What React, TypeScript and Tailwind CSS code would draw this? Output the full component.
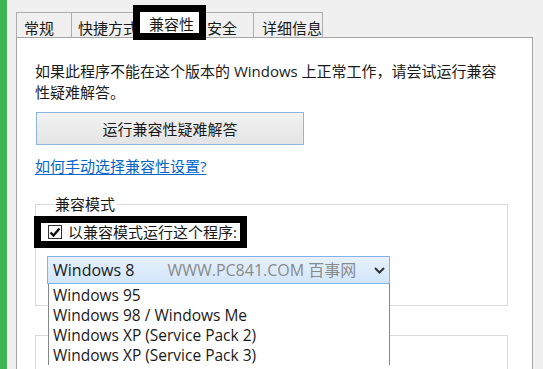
import { useState } from 'react'

const FONT = "font-['Open_Sans','Noto_Sans_CJK_SC',sans-serif]"

const OPTIONS = [
  'Windows 95',
  'Windows 98 / Windows Me',
  'Windows XP (Service Pack 2)',
  'Windows XP (Service Pack 3)',
]

export default function App() {
  const [checked, setChecked] = useState(true)

  return (
    <div className={`flex h-[369px] w-[543px] overflow-hidden bg-[#f0f0f0] text-[#1a1a1a] ${FONT}`}>
      {/* 窗口左侧绿色边 */}
      <div className="w-[7px] shrink-0 bg-[#3db652]" />
      <div className="w-[1px] shrink-0 bg-[#fafafa]" />
      <div className="flex min-w-0 flex-1 flex-col">
        <div className="h-[3px] bg-[#f6f6f6]" />
        <div className="h-[2px] bg-[#3db652]" />

        {/* 标签页 */}
        <div className="relative ml-[8px] mt-[12px] flex h-[25px] items-end text-[15px] leading-[20px]">
          <div className="h-[25px] w-[55px] border-l border-t border-[#adadad] pl-[7px] pt-[5px]">常规</div>
          <div className="h-[25px] w-[67px] border-l border-t border-[#adadad] pl-[6px] pt-[5px]">快捷方式</div>
          <div className="z-10 -mb-[1px] h-[28px] w-[65px] border-l border-r border-t border-[#adadad] bg-white pl-[10px] pt-[3px]">
            兼容性
          </div>
          <div className="h-[25px] w-[50px] border-t border-[#adadad] pl-[4px] pt-[5px]">安全</div>
          <div className="h-[25px] w-[70px] border-l border-r border-t border-[#adadad] pl-[8px] pt-[5px]">详细信息</div>
          <div className="pointer-events-none absolute left-[117px] top-[-7px] z-20 h-[35px] w-[73px] border-[7px] border-black" />
        </div>

        {/* 内容面板 */}
        <div className="ml-[8px] w-[517px] flex-1 border border-[#a5a5a5] bg-white pl-[18px] pr-[24px] pt-[23px] text-[15px] leading-[20px]">
          <p className="whitespace-nowrap leading-[21px]">
            如果此程序不能在这个版本的 Windows 上正常工作，请尝试运行兼容
            <br />
            性疑难解答。
          </p>

          <button
            type="button"
            className="mt-[9px] ml-[1px] flex h-[33px] w-[268px] items-center justify-center border border-[#8ab6e2] bg-gradient-to-b from-[#f2f2f2] to-[#e4e4e4]"
          >
            运行兼容性疑难解答
          </button>

          <a href="#" className="mt-[11px] block w-fit text-[#0066cc] underline underline-offset-2">
            如何手动选择兼容性设置?
          </a>

          <fieldset className="mt-[18px] h-[112px] border border-[#dadada] pl-[11px]">
            <legend className="ml-[7px] px-[1px]">兼容模式</legend>

            <label className="relative mt-[8px] flex h-[20px] items-center pl-[1px]">
              <input
                type="checkbox"
                className="sr-only"
                checked={checked}
                onChange={() => setChecked(!checked)}
              />
              <span className="flex h-[14px] w-[14px] items-center justify-center border border-[#333] bg-white">
                {checked && (
                  <svg width="12" height="11" viewBox="0 0 12 11">
                    <path d="M1.5 5.5 L4.5 8.5 L10.5 1.5" fill="none" stroke="#111" strokeWidth="2.4" />
                  </svg>
                )}
              </span>
              <span className="ml-[6px]">以兼容模式运行这个程序:</span>
              <span className="pointer-events-none absolute left-[-13px] top-[-6px] h-[32px] w-[213px] border-[7px] border-black" />
            </label>

            {/* 下拉框 */}
            <div className="relative z-10 mt-[14px] w-[343px]">
              <div className="flex h-[28px] items-center border border-[#7eb4ea] bg-gradient-to-b from-[#e6f1fc] to-[#d2e6fa] pl-[5px] pr-[4px] text-[16px]">
                <span>Windows 8</span>
                <span className="ml-[33px] text-[#8a8a8a]">WWW.PC841.COM 百事网</span>
                <svg className="ml-auto" width="11" height="7" viewBox="0 0 11 7">
                  <path d="M1 1 L5.5 5.5 L10 1" fill="none" stroke="#333" strokeWidth="2" />
                </svg>
              </div>
              <ul className="absolute left-[1px] top-[28px] w-[342px] border-l border-r border-[#828790] bg-white pt-[1px] text-[15.5px] leading-[20px]">
                {OPTIONS.map((o) => (
                  <li key={o} className="h-[20px] pl-[4px]">
                    {o}
                  </li>
                ))}
              </ul>
            </div>
          </fieldset>

          <fieldset className="mt-[19px] h-[80px] border border-[#dadada] pl-[11px]">
            <legend className="ml-[7px] px-[1px]">设置</legend>
          </fieldset>
        </div>
      </div>
    </div>
  )
}
